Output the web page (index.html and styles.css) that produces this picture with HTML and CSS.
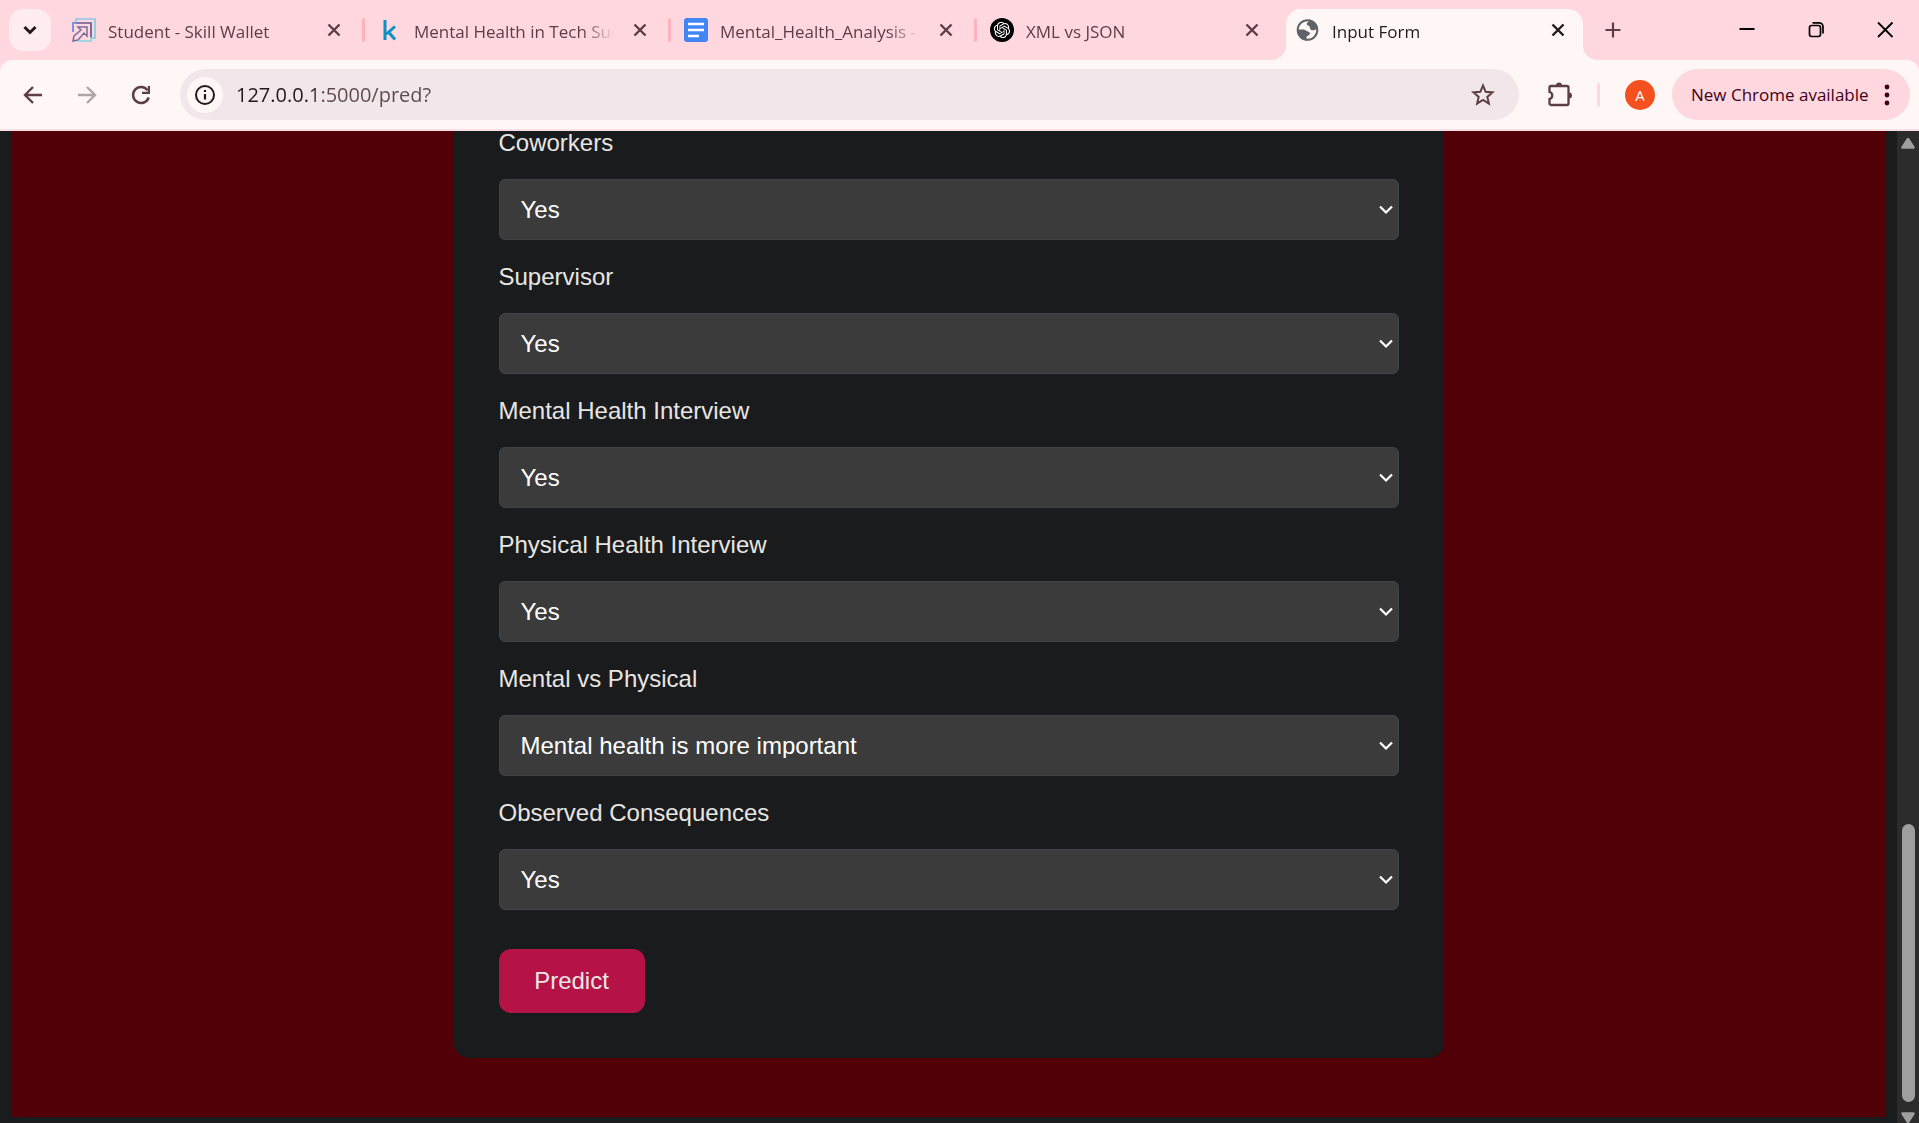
FILE: index.html
```html
<!DOCTYPE html>
<html lang="en">
<head>
<meta charset="utf-8">
<meta name="viewport" content="width=device-width, initial-scale=1">
<title>Input Form</title>
<link rel="stylesheet" href="styles.css">
</head>
<body>
<svg class="sprite" aria-hidden="true">
  <symbol id="close" viewBox="0 0 24 24"><path d="M6.500 6.500l11 11M17.500 6.500l-11 11" fill="none" stroke="currentColor" stroke-width="2.400"/></symbol>
</svg>
<header class="chrome">
  <div class="tabstrip">
    <button class="tab-search" aria-label="Search tabs"><svg viewBox="0 0 24 24" width="24" height="24"><path d="M6.500 9l5.500 5.500L17.500 9" fill="none" stroke="currentColor" stroke-width="3"/></svg></button>
    <nav class="tabs" aria-label="Tabs">
      <div class="tab">
        <svg class="favicon" viewBox="0 0 24 24" fill="none"><path d="M4 5V1h19v19h-4" stroke="#8ec3f0" stroke-width="1.500"/><path d="M1 14V5h18v15" stroke="#68588c" stroke-width="1.700"/><path d="M1 14V5h4" stroke="#7f9df0" stroke-width="1.500"/><path d="M1 23l1-5 7-6-3-3h9v9l-3-3-6 7z" stroke="#7a6d9c" stroke-width="1.500"/><path d="M6 23h13v-4M23 1v19h-3" stroke="#86d5e3" stroke-width="1.500"/></svg>
        <a class="tab-title" href="#">Student - Skill Wallet</a>
        <button class="tab-close" aria-label="Close tab"><svg viewBox="0 0 24 24"><use href="#close"/></svg></button>
      </div>
      <div class="tab">
        <svg class="favicon" viewBox="0 0 24 24"><path d="M7 2v20M17 8.500L8.500 16M10.500 14l6.500 7.500" fill="none" stroke="#0891c5" stroke-width="3"/></svg>
        <a class="tab-title" href="#">Mental Health in Tech Survey</a>
        <button class="tab-close" aria-label="Close tab"><svg viewBox="0 0 24 24"><use href="#close"/></svg></button>
      </div>
      <div class="tab">
        <svg class="favicon" viewBox="0 0 24 24"><rect width="24" height="24" rx="3" fill="#4285f4"/><path d="M4 6h16M4 12h16M4 18h11" stroke="#fff" stroke-width="2.600"/></svg>
        <a class="tab-title" href="#">Mental_Health_Analysis - Google Docs</a>
        <button class="tab-close" aria-label="Close tab"><svg viewBox="0 0 24 24"><use href="#close"/></svg></button>
      </div>
      <div class="tab">
        <svg class="favicon" viewBox="0 0 24 24"><circle cx="12" cy="12" r="12" fill="#000"/><path transform="translate(3.800 3.800) scale(.68)" fill="#fff" d="M22.2819 9.8211a5.9847 5.9847 0 0 0-.5157-4.9108 6.0462 6.0462 0 0 0-6.5098-2.9A6.0651 6.0651 0 0 0 4.9807 4.1818a5.9847 5.9847 0 0 0-3.9977 2.9 6.0462 6.0462 0 0 0 .7427 7.0966 5.98 5.98 0 0 0 .511 4.9107 6.051 6.051 0 0 0 6.5146 2.9001A5.9847 5.9847 0 0 0 13.2599 24a6.0557 6.0557 0 0 0 5.7718-4.2058 5.9894 5.9894 0 0 0 3.9977-2.9001 6.0557 6.0557 0 0 0-.7475-7.0729zm-9.022 12.6081a4.4755 4.4755 0 0 1-2.8764-1.0408l.1419-.0804 4.7783-2.7582a.7948.7948 0 0 0 .3927-.6813v-6.7369l2.02 1.1686a.071.071 0 0 1 .038.052v5.5826a4.504 4.504 0 0 1-4.4945 4.4944zm-9.6607-4.1254a4.4708 4.4708 0 0 1-.5346-3.0137l.142.0852 4.783 2.7582a.7712.7712 0 0 0 .7806 0l5.8428-3.3685v2.3324a.0804.0804 0 0 1-.0332.0615L9.74 19.9502a4.4992 4.4992 0 0 1-6.1408-1.6464zM2.3408 7.8956a4.485 4.485 0 0 1 2.3655-1.9728V11.6a.7664.7664 0 0 0 .3879.6765l5.8144 3.3543-2.0201 1.1685a.0757.0757 0 0 1-.071 0l-4.8303-2.7865A4.504 4.504 0 0 1 2.3408 7.872zm16.5963 3.8558L13.1038 8.364 15.1192 7.2a.0757.0757 0 0 1 .071 0l4.8303 2.7913a4.4944 4.4944 0 0 1-.6765 8.1042v-5.6772a.79.79 0 0 0-.407-.667zm2.0107-3.0231l-.142-.0852-4.7735-2.7818a.7759.7759 0 0 0-.7854 0L9.409 9.2297V6.8974a.0662.0662 0 0 1 .0284-.0615l4.8303-2.7866a4.4992 4.4992 0 0 1 6.6802 4.66zM8.3065 12.863l-2.02-1.1638a.0804.0804 0 0 1-.038-.0567V6.0742a4.4992 4.4992 0 0 1 7.3757-3.4537l-.142.0805L8.704 5.459a.7948.7948 0 0 0-.3927.6813zm1.0976-2.3654l2.602-1.4998 2.6069 1.4998v2.9994l-2.5974 1.4997-2.6067-1.4997Z"/></svg>
        <a class="tab-title" href="#">XML vs JSON</a>
        <button class="tab-close" aria-label="Close tab"><svg viewBox="0 0 24 24"><use href="#close"/></svg></button>
      </div>
      <div class="tab tab-active">
        <svg class="favicon" viewBox="0 0 24 24"><g fill="#5f6368"><circle cx="11.500" cy="12" r="9.800" fill="#fff7f5" stroke="#5f6368" stroke-width="2"/><path d="M13 1.500c.5 2.500-1.800 2.500-2.300 4.300-.3 1.700 1.800 1.600 2.800 2.700 1 1.300.2 2.700 1.800 3.500 2 .8 3.200-.8 6.700-.5A11 11 0 0 0 13 1.500z"/><path d="M1.500 11.500h6c2 0 2.200 1.300 3.700 1.700 2 .4 3 1.300 2.600 2.800-.5 1.800-3.300 1.500-3.300 3.500v3A11 11 0 0 1 1.500 11.500z"/></g></svg>
        <a class="tab-title" href="#" aria-current="page">Input Form</a>
        <button class="tab-close" aria-label="Close tab"><svg viewBox="0 0 24 24"><use href="#close"/></svg></button>
      </div>
    </nav>
    <button class="icon-button new-tab" aria-label="New tab"><svg viewBox="0 0 24 24" width="24" height="24"><path d="M12 4.500v15M4.500 12h15" stroke="currentColor" stroke-width="2.200"/></svg></button>
    <div class="window-controls">
      <button class="window-button" aria-label="Minimize"><svg viewBox="0 0 24 24"><path d="M4.500 11h15" stroke="#000" stroke-width="2"/></svg></button>
      <button class="window-button" aria-label="Restore"><svg viewBox="0 0 24 24" fill="none" stroke="#000" stroke-width="1.700"><rect x="5.500" y="7.500" width="11" height="11" rx="2.200"/><path d="M8.500 4.800H15a4 4 0 0 1 4 4V15.500"/></svg></button>
      <button class="window-button" aria-label="Close window"><svg viewBox="0 0 24 24"><path d="M5 4.500l14.500 14.500M19.500 4.500L5 19" stroke="#000" stroke-width="1.800"/></svg></button>
    </div>
  </div>
  <div class="toolbar">
    <button class="icon-button" aria-label="Back"><svg viewBox="0 0 24 24"><path d="M21 12H4.500M12 4l-8 8 8 8" fill="none" stroke="currentColor" stroke-width="2.400"/></svg></button>
    <button class="icon-button" aria-label="Forward" disabled><svg viewBox="0 0 24 24"><path d="M3 12h16.500M12 4l8 8-8 8" fill="none" stroke="currentColor" stroke-width="2.400"/></svg></button>
    <button class="icon-button" aria-label="Reload"><svg viewBox="0 0 24 24"><path d="M19.700 14.500A8 8 0 1 1 18.500 7.200" fill="none" stroke="currentColor" stroke-width="2.500"/><path d="M21 3v8h-8v-2.200h5.800V3z" fill="currentColor"/></svg></button>
    <div class="omnibox">
      <button class="site-info" aria-label="View site information"><svg viewBox="0 0 24 24" width="24" height="24"><circle cx="12" cy="12" r="9" fill="none" stroke="currentColor" stroke-width="2"/><path d="M12 11v5.500M12 7v2" stroke="currentColor" stroke-width="2.200"/></svg></button>
      <input class="url" type="text" aria-label="Address" value="127.0.0.1:5000/pred?">
      <button class="bookmark" aria-label="Bookmark this tab"><svg viewBox="0 0 24 24" width="24" height="24"><path d="M12 2.500l2.700 6.300 6.800.6-5.200 4.500 1.600 6.700L12 17l-5.900 3.600 1.600-6.700-5.200-4.500 6.800-.6z" fill="none" stroke="currentColor" stroke-width="2"/></svg></button>
    </div>
    <button class="icon-button extensions" aria-label="Extensions"><svg viewBox="0 0 26 26"><path d="M4 4h16a1.500 1.500 0 0 1 1.500 1.500v16A1.500 1.500 0 0 1 20 23H4a1.500 1.500 0 0 1-1.500-1.500V17a3.600 3.600 0 0 0 0-7V5.500A1.500 1.500 0 0 1 4 4z" fill="none" stroke="currentColor" stroke-width="2.300"/><path d="M9 3.500a3 3 0 0 1 6 0zM22 10.500a3 3 0 0 1 0 6z" fill="currentColor"/></svg></button>
    <span class="divider"></span>
    <button class="avatar" aria-label="Profile">A</button>
    <button class="update-chip">New Chrome available<svg viewBox="0 0 6 24" width="6" height="24"><circle cx="3" cy="4" r="2.400"/><circle cx="3" cy="12" r="2.400"/><circle cx="3" cy="20" r="2.400"/></svg></button>
  </div>
</header>
<div class="viewport">
  <main class="page">
    <form class="card">
      <div class="field"><label for="coworkers">Coworkers</label><select id="coworkers"><option>Yes</option><option>No</option></select></div>
      <div class="field"><label for="supervisor">Supervisor</label><select id="supervisor"><option>Yes</option><option>No</option></select></div>
      <div class="field"><label for="mental-interview">Mental Health Interview</label><select id="mental-interview"><option>Yes</option><option>No</option></select></div>
      <div class="field"><label for="physical-interview">Physical Health Interview</label><select id="physical-interview"><option>Yes</option><option>No</option></select></div>
      <div class="field"><label for="mental-physical">Mental vs Physical</label><select id="mental-physical"><option>Mental health is more important</option></select></div>
      <div class="field"><label for="consequences">Observed Consequences</label><select id="consequences"><option>Yes</option><option>No</option></select></div>
      <button class="predict" type="submit">Predict</button>
    </form>
  </main>
  <div class="scrollbar" aria-hidden="true">
    <svg viewBox="0 0 16 12" width="16" height="12"><path d="M8 2l5.500 8.500h-11z" fill="#9f9f9f" stroke="#9f9f9f" stroke-width="2.500" stroke-linejoin="round"/></svg>
    <div class="track"><div class="thumb"></div></div>
    <svg viewBox="0 0 16 12" width="16" height="12"><path d="M8 11l5.500-8.500h-11z" fill="#9f9f9f" stroke="#9f9f9f" stroke-width="2.500" stroke-linejoin="round"/></svg>
  </div>
</div>
</body>
</html>
```
FILE: styles.css
```css
* { box-sizing: border-box; }

body {
  margin: 0;
  height: 100vh;
  display: flex;
  flex-direction: column;
  overflow: hidden;
  background: #1a1b1d;
  font-family: "Liberation Sans", Arial, sans-serif;
}

button {
  margin: 0;
  padding: 0;
  border: 0;
  background: none;
  color: inherit;
  font: inherit;
}

svg { display: block; flex: none; }
.sprite { position: absolute; width: 0; height: 0; }

/* Browser frame */
.chrome {
  flex: none;
  background: #ffd7de;
  color: #5c3f45;
  font-family: "Open Sans", sans-serif;
}

.tabstrip {
  display: flex;
  align-items: center;
  height: 60px;
  padding-left: 9px;
}

.tab-search {
  display: grid;
  place-items: center;
  width: 42px;
  height: 42px;
  margin-right: 11px;
  border-radius: 14px;
  background: #ffecef;
  color: #22191b;
}

.tabs { display: flex; align-self: stretch; padding-top: 9px; }

.tab {
  position: relative;
  display: flex;
  align-items: center;
  width: 306px;
  padding: 0 22px 9px 10px;
}

.tab:not(.tab-active)::after {
  content: "";
  position: absolute;
  right: 3px;
  top: 9px;
  width: 3px;
  height: 24px;
  border-radius: 2px;
  background: #ffb1c0;
}

.tab:nth-last-child(2)::after { display: none; }

.tab-active {
  width: 297px;
  padding-right: 13px;
  border-radius: 15px 15px 0 0;
  background: #fff7f5;
  color: #22191b;
}

.tab-active::before,
.tab-active::after {
  content: "";
  position: absolute;
  bottom: 0;
  width: 15px;
  height: 15px;
}

.tab-active::before { right: 100%; background: radial-gradient(circle at 0 0, transparent 15px, #fff7f5 15px); }
.tab-active::after { left: 100%; background: radial-gradient(circle at 100% 0, transparent 15px, #fff7f5 15px); }

.favicon { width: 24px; height: 24px; margin-right: 12px; }

.tab-title {
  flex: 1;
  min-width: 0;
  padding-top: 3px;
  overflow: hidden;
  white-space: nowrap;
  color: inherit;
  font-size: 17px;
  line-height: 24px;
  text-decoration: none;
  -webkit-mask-image: linear-gradient(to left, transparent, #000 32px);
  mask-image: linear-gradient(to left, transparent, #000 32px);
}

.tab-close { width: 24px; height: 24px; margin-left: 14px; }

.icon-button {
  display: grid;
  place-items: center;
  width: 42px;
  height: 42px;
}

.icon-button svg { width: 24px; height: 24px; }
.icon-button:disabled { color: #aea6a5; }
.new-tab { margin-left: 9px; }

.window-controls { display: flex; margin-left: auto; }
.window-button { display: grid; place-items: center; width: 69px; height: 60px; }
.window-button svg { width: 24px; height: 24px; }

.toolbar {
  display: flex;
  align-items: center;
  gap: 12px;
  height: 71px;
  padding: 9px 9px 9px 12px;
  border-bottom: 2px solid #f8dfe3;
  border-radius: 12px 12px 0 0;
  background: #fff7f5;
}

.omnibox {
  flex: 1;
  display: flex;
  align-items: center;
  height: 51px;
  margin-left: 6px;
  padding: 0 24px 0 7px;
  border-radius: 26px;
  background: #f1e6e9;
}

.site-info {
  display: grid;
  place-items: center;
  width: 36px;
  height: 36px;
  border-radius: 50%;
  background: #fff7f5;
  color: #22191b;
}

.url {
  flex: 1;
  min-width: 0;
  padding: 0 0 0 13px;
  border: 0;
  outline: 0;
  /* The host is darker than the port and path */
  background: linear-gradient(to right, #22191b 92px, #5c4a4f 92px) text;
  -webkit-text-fill-color: transparent;
  font: 20px/28px "Open Sans", sans-serif;
}

.extensions { margin-left: 8px; }
.extensions svg { width: 26px; height: 26px; }
.divider { width: 3px; height: 24px; margin-left: 4px; border-radius: 2px; background: #ffd7de; }

.avatar {
  width: 30px;
  height: 30px;
  margin: 0 5px 0 13px;
  border-radius: 50%;
  background: #f4511e;
  color: #fff;
  font-size: 15px;
}

.update-chip {
  display: flex;
  align-items: center;
  justify-content: space-between;
  width: 238px;
  height: 51px;
  padding: 0 20px 0 19px;
  border-radius: 26px;
  background: #ffd7de;
  color: #3f0018;
  font-size: 17px;
  white-space: nowrap;
}

.update-chip svg { fill: currentColor; }

/* Web page */
.viewport { flex: 1; min-height: 0; display: flex; overflow: hidden; }

.page {
  flex: 1;
  margin: 0 12px 6px;
  overflow: hidden;
  background: #510007;
}

.card {
  max-width: 990px;
  margin: 0 auto;
  padding: 0 45px 45px;
  border-radius: 0 0 15px 15px;
  background: #1a1b1d;
  color: #e8e6e3;
  font-size: 24px;
  line-height: 24px;
}

.field { display: grid; gap: 24px; margin-bottom: 25px; }

select {
  appearance: none;
  width: 100%;
  height: 61px;
  padding: 0 40px 0 21px;
  border: 1px solid #3e4446;
  border-radius: 6px;
  background: #3b3b3b url("data:image/svg+xml,%3Csvg xmlns='http://www.w3.org/2000/svg' width='14' height='10'%3E%3Cpath d='M1 1.500l6 6 6-6' fill='none' stroke='white' stroke-width='2.200'/%3E%3C/svg%3E") no-repeat right 5px center;
  color: #fff;
  font: inherit;
}

.predict {
  width: 146px;
  height: 64px;
  margin-top: 14px;
  border-radius: 12px;
  background: #b51248;
}

.scrollbar {
  display: flex;
  flex-direction: column;
  align-items: center;
  width: 22px;
  padding-top: 6px;
  background: #2c2c2c;
}

.track { flex: 1; display: flex; align-items: flex-end; padding: 9px 0; }
.thumb { width: 13px; height: 29.5%; border-radius: 7px; background: #9f9f9f; }
```
